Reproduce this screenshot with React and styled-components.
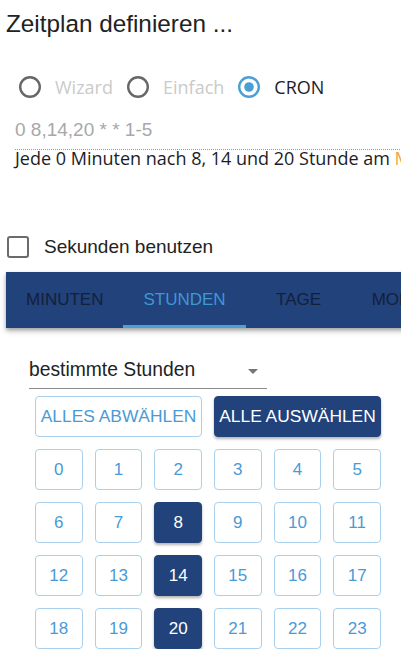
import React from 'react';
import styled, { createGlobalStyle } from 'styled-components';

const GlobalStyle = createGlobalStyle`
  html, body {
    margin: 0;
    padding: 0;
    overflow: hidden;
    background: #ffffff;
    font-family: "Liberation Sans", Arial, sans-serif;
    color: #222222;
  }
`;

const NAVY = '#21427a';
const BLUE = '#4a9ad6';
const BLUE_LINE = '#a9d0ec';

const Page = styled.div`
  width: 600px;
  padding-left: 6px;
  display: flex;
  flex-direction: column;
`;

const Title = styled.h1`
  margin: 10px 0 0;
  font-size: 24.3px;
  line-height: 28px;
  font-weight: normal;
  color: #222222;
`;

const RadioRow = styled.div`
  margin-top: 28px;
  height: 42px;
  padding-left: 12px;
  display: flex;
  align-items: center;
  gap: 13px;
`;

const RadioItem = styled.label`
  display: flex;
  align-items: center;
  gap: 13px;
  font-family: "Open Sans", "Noto Sans", sans-serif;
  font-size: 18px;
  color: ${(p) => (p.$active ? '#1c1c28' : '#cacaca')};
`;

const CronInput = styled.div`
  margin: 11px 0 0 9px;
  padding-bottom: 8px;
  border-bottom: 1px dotted #9a9a9a;
  font-size: 19px;
  line-height: 22px;
  color: #a8a8a8;
`;

const Description = styled.div`
  margin: 0 0 0 9px;
  font-family: "Open Sans", "Noto Sans", sans-serif;
  font-size: 18px;
  line-height: 17px;
  white-space: nowrap;
  color: #1c1c28;
`;

const Accent = styled.span`
  color: #eea548;
`;

const CheckRow = styled.label`
  margin-top: 69px;
  display: flex;
  align-items: center;
  gap: 15px;
  font-size: 19px;
  line-height: 22px;
  color: #222222;
`;

const CheckBox = styled.span`
  box-sizing: border-box;
  width: 22px;
  height: 22px;
  margin-left: 1px;
  border: 2.5px solid #6b6b6b;
  border-radius: 3px;
`;

const TabBar = styled.div`
  margin-top: 14px;
  height: 56px;
  background: ${NAVY};
  display: flex;
  box-shadow: 0 2px 4px rgba(0, 0, 0, 0.3), 0 4px 6px rgba(0, 0, 0, 0.12);
`;

const Tab = styled.div`
  box-sizing: border-box;
  flex-shrink: 0;
  min-width: 106px;
  padding: 0 20px;
  display: flex;
  align-items: center;
  justify-content: center;
  font-size: 17px;
  white-space: nowrap;
  color: ${(p) => (p.$selected ? '#3f97d5' : '#14203a')};
  box-shadow: ${(p) => (p.$selected ? 'inset 0 -3px 0 #4ba0d8' : 'none')};
`;

const TabContent = styled.div`
  padding-left: 23px;
  width: 352px;
  display: flex;
  flex-direction: column;
`;

const Select = styled.div`
  margin-top: 31px;
  width: 238px;
  padding-bottom: 7px;
  border-bottom: 1px solid #8a8a8a;
  display: flex;
  align-items: center;
  justify-content: space-between;
  font-size: 19.3px;
  line-height: 22px;
  color: #222222;
`;

const Arrow = styled.span`
  width: 0;
  height: 0;
  margin-right: 9px;
  margin-top: 2px;
  border-left: 5px solid transparent;
  border-right: 5px solid transparent;
  border-top: 5px solid #757575;
`;

const ButtonRow = styled.div`
  margin: 7px 0 0 6px;
  display: grid;
  grid-template-columns: 1fr 1fr;
  gap: 12px;
`;

const Button = styled.button`
  box-sizing: border-box;
  height: 41px;
  padding: 0;
  border-radius: 4px;
  font-family: "Liberation Sans", Arial, sans-serif;
  font-size: 17.4px;
  white-space: nowrap;
  border: 1px solid ${(p) => (p.$filled ? NAVY : BLUE_LINE)};
  background: ${(p) => (p.$filled ? NAVY : '#ffffff')};
  color: ${(p) => (p.$filled ? '#ffffff' : BLUE)};
  box-shadow: ${(p) => (p.$filled ? '0 2px 3px rgba(0,0,0,0.3)' : 'none')};
`;

const HourGrid = styled.div`
  margin: 12px 0 0 6px;
  display: grid;
  grid-template-columns: repeat(6, 1fr);
  column-gap: 12px;
  row-gap: 12px;
`;

const HourCell = styled(Button)`
  font-size: 17px;
`;

function RadioIcon({ checked }) {
  const color = checked ? '#4a9fd8' : '#676767';
  return (
    <svg width="24" height="24" viewBox="0 0 24 24">
      <circle cx="12" cy="12" r="9.8" fill="none" stroke={color} strokeWidth="2.4" />
      {checked && <circle cx="12" cy="12" r="4.8" fill={color} />}
    </svg>
  );
}

const modes = [
  { label: 'Wizard', checked: false },
  { label: 'Einfach', checked: false },
  { label: 'CRON', checked: true },
];

const tabs = ['MINUTEN', 'STUNDEN', 'TAGE', 'MONATE', 'WOCHENTAGE'];
const selectedHours = [8, 14, 20];

export default function App() {
  return (
    <>
      <GlobalStyle />
      <Page>
        <Title>Zeitplan definieren ...</Title>

        <RadioRow>
          {modes.map((m) => (
            <RadioItem key={m.label} $active={m.checked}>
              <RadioIcon checked={m.checked} />
              {m.label}
            </RadioItem>
          ))}
        </RadioRow>

        <CronInput>0 8,14,20 * * 1-5</CronInput>
        <Description>
          Jede 0 Minuten nach 8, 14 und 20 Stunde am <Accent>Montag bis Freitag</Accent>
        </Description>

        <CheckRow>
          <CheckBox />
          Sekunden benutzen
        </CheckRow>

        <TabBar>
          {tabs.map((t) => (
            <Tab key={t} $selected={t === 'STUNDEN'}>
              {t}
            </Tab>
          ))}
        </TabBar>

        <TabContent>
          <Select>
            bestimmte Stunden
            <Arrow />
          </Select>

          <ButtonRow>
            <Button>ALLES ABWÄHLEN</Button>
            <Button $filled>ALLE AUSWÄHLEN</Button>
          </ButtonRow>

          <HourGrid>
            {Array.from({ length: 24 }, (_, h) => (
              <HourCell key={h} $filled={selectedHours.includes(h)}>
                {h}
              </HourCell>
            ))}
          </HourGrid>
        </TabContent>
      </Page>
    </>
  );
}
